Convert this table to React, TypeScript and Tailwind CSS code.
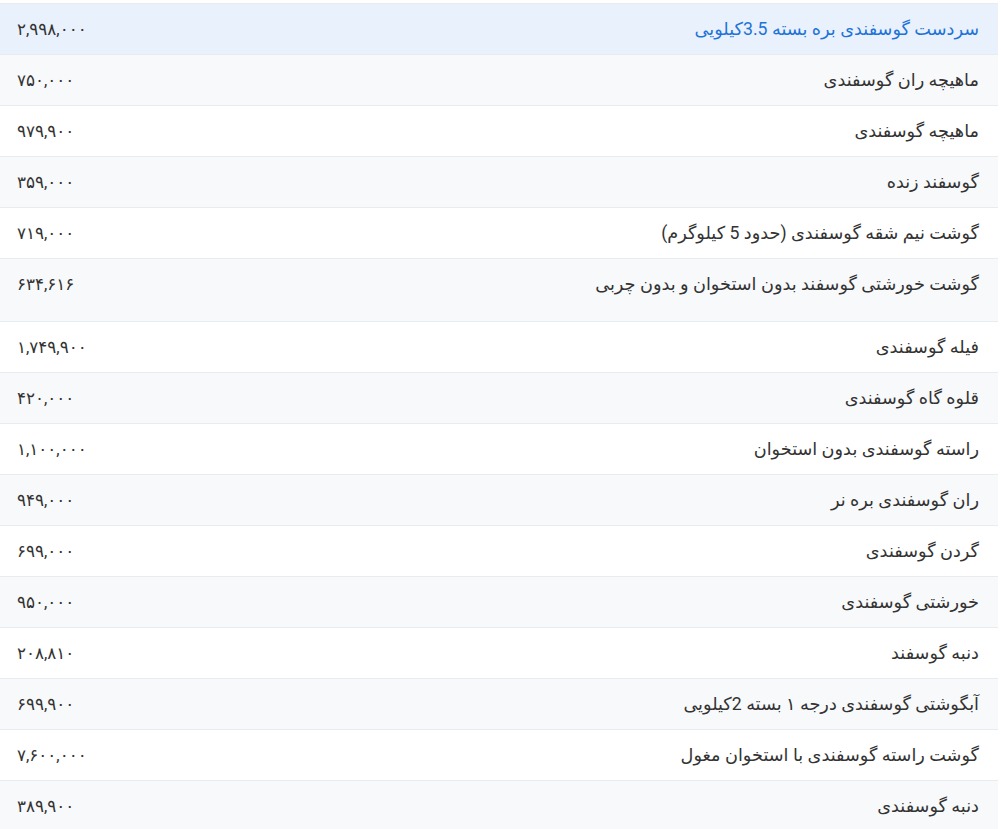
import React from "react";

const rows: { name: string; price: string; tall?: boolean }[] = [
  { name: "سردست گوسفندی بره بسته 3.5کیلویی", price: "۲,۹۹۸,۰۰۰" },
  { name: "ماهیچه ران گوسفندی", price: "۷۵۰,۰۰۰" },
  { name: "ماهیچه گوسفندی", price: "۹۷۹,۹۰۰" },
  { name: "گوسفند زنده", price: "۳۵۹,۰۰۰" },
  { name: "گوشت نیم شقه گوسفندی (حدود 5 کیلوگرم)", price: "۷۱۹,۰۰۰" },
  { name: "گوشت خورشتی گوسفند بدون استخوان و بدون چربی", price: "۶۳۴,۶۱۶", tall: true },
  { name: "فیله گوسفندی", price: "۱,۷۴۹,۹۰۰" },
  { name: "قلوه گاه گوسفندی", price: "۴۲۰,۰۰۰" },
  { name: "راسته گوسفندی بدون استخوان", price: "۱,۱۰۰,۰۰۰" },
  { name: "ران گوسفندی بره نر", price: "۹۴۹,۰۰۰" },
  { name: "گردن گوسفندی", price: "۶۹۹,۰۰۰" },
  { name: "خورشتی گوسفندی", price: "۹۵۰,۰۰۰" },
  { name: "دنبه گوسفند", price: "۲۰۸,۸۱۰" },
  { name: "آبگوشتی گوسفندی درجه ۱ بسته 2کیلویی", price: "۶۹۹,۹۰۰" },
  { name: "گوشت راسته گوسفندی با استخوان مغول", price: "۷,۶۰۰,۰۰۰" },
  { name: "دنبه گوسفندی", price: "۳۸۹,۹۰۰" },
];

export default function App() {
  return (
    <div
      className="w-[1001px] h-[829px] overflow-hidden bg-white pt-[3px] pr-[3px]"
      style={{ fontFamily: 'Roboto, "DejaVu Sans", sans-serif' }}
    >
      <div dir="rtl" className="w-[998px] border-t border-[#e9ecef]">
        {rows.map((r, i) => {
          const bg = i === 0 ? "bg-[#e8f1fc]" : i % 2 === 1 ? "bg-[#f8f9fb]" : "bg-white";
          const color = i === 0 ? "text-[#1e73d8]" : "text-[#333333]";
          return (
            <div
              key={i}
              className={`flex items-start justify-between border-b border-[#e9ecef] ${bg} ${color} leading-[24px] pt-[13px] ${r.tall ? "pb-[25px]" : "pb-[13px]"}`}
            >
              <div className="pr-[19px] text-[17.7px]">{r.name}</div>
              <div className="pl-[17px] text-[16.8px] text-[#333333]">{r.price}</div>
            </div>
          );
        })}
      </div>
    </div>
  );
}
